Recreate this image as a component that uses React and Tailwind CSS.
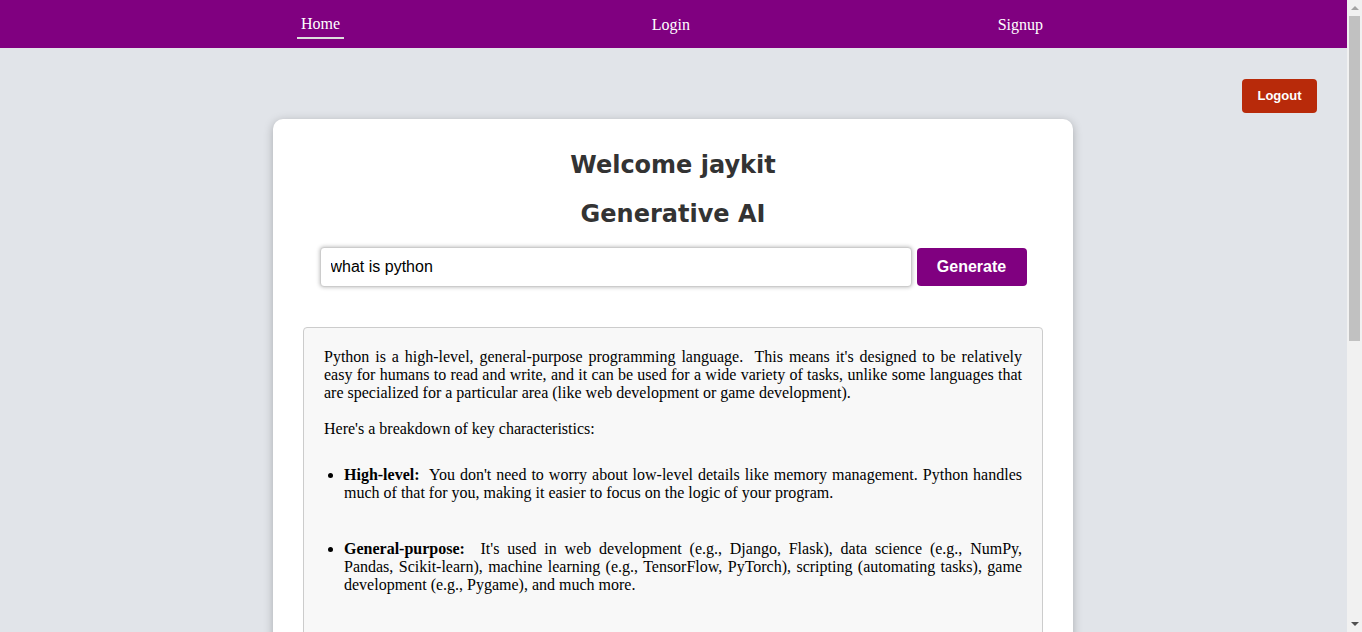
import { useState } from "react";

const serif = { fontFamily: '"Liberation Serif", "Times New Roman", serif' };

function NavBar() {
  return (
    <nav className="h-12 bg-[#800080]">
      <ul className="ml-[297px] w-[746px] flex justify-between items-start text-white text-base font-['Liberation_Serif',serif]">
        <li className="mt-[15px] px-1 pb-[4px] border-b-2 border-[#dddddd] leading-[18px]">Home</li>
        <li className="mt-[16px] leading-[18px]">Login</li>
        <li className="mt-[16px] leading-[18px]">Signup</li>
      </ul>
    </nav>
  );
}

// fake page scrollbar, drawn over the right edge like the browser's own
function ScrollBar() {
  return (
    <div className="fixed right-0 top-0 flex h-screen w-[15px] flex-col bg-[#f1f1f1]">
      <div className="flex h-[16px] items-center justify-center">
        <div className="h-0 w-0 border-x-[4px] border-b-[4px] border-x-transparent border-b-[#a3a3a3]" />
      </div>
      <div className="mx-[2px] h-[325px] bg-[#c1c1c1]" />
      <div className="flex-1" />
      <div className="flex h-[16px] items-center justify-center">
        <div className="h-0 w-0 border-x-[4px] border-t-[4px] border-x-transparent border-t-[#505050]" />
      </div>
    </div>
  );
}

export default function App() {
  const [prompt, setPrompt] = useState("what is python");

  return (
    <div className="min-h-screen bg-[#e1e4e9]">
      <ScrollBar />
      <div className="mr-[15px] pb-[60px]">
        <NavBar />
        <div className="flex justify-end pr-[30px] pt-[31px]">
          <button className="h-[34px] w-[75px] rounded bg-[#b82a0a] text-white text-[13px] font-bold font-['Liberation_Sans',Arial,sans-serif]">
            Logout
          </button>
        </div>

        <div className="ml-[273px] mt-[6px] w-[800px] rounded-[10px] bg-white px-[30px] pt-[32px] pb-[30px] shadow-[0_2px_10px_rgba(0,0,0,0.25)]">
          <h2 className="text-center text-2xl leading-[28px] font-bold text-[#333] font-['DejaVu_Sans',Verdana,sans-serif]">Welcome jaykit</h2>
          <h2 className="mt-[21px] text-center text-2xl leading-[28px] font-bold text-[#333] font-['DejaVu_Sans',Verdana,sans-serif]">Generative AI</h2>

          <div className="mt-[19px] flex items-center justify-center gap-[5px]">
            <input
              value={prompt}
              onChange={e => setPrompt(e.target.value)}
              className="h-10 w-[592px] rounded border border-[#ccc] bg-white px-[10px] text-base text-black shadow-[0_0_4px_rgba(0,0,0,0.3)] outline-none font-['Liberation_Sans',Arial,sans-serif]"
            />
            <button className="h-[38px] w-[110px] rounded bg-[#800080] text-white text-base font-bold font-['Liberation_Sans',Arial,sans-serif]">
              Generate
            </button>
          </div>

          <div className="mt-[40px] rounded border border-[#cccccc] bg-[#f8f8f8] px-[20px] pt-[20px] pb-[40px] text-base leading-[18px] text-black text-justify" style={serif}>
            <p>
              Python is a high-level, general-purpose programming language.&nbsp; This means it's designed to be relatively easy for humans to read and write, and it can be used for a wide variety of tasks, unlike some languages that are specialized for a particular area (like web development or game development).
            </p>
            <p className="mt-[18px]">Here's a breakdown of key characteristics:</p>

            <ul className="mt-[28px] list-disc pl-[20px]">
              <li>
                <b>High-level:</b>&nbsp; You don't need to worry about low-level details like memory management. Python handles much of that for you, making it easier to focus on the logic of your program.
              </li>
              <li className="mt-[38px]">
                <b>General-purpose:</b>&nbsp; It's used in web development (e.g., Django, Flask), data science (e.g., NumPy, Pandas, Scikit-learn), machine learning (e.g., TensorFlow, PyTorch), scripting (automating tasks), game development (e.g., Pygame), and much more.
              </li>
              <li className="mt-[38px]">
                <b>Interpreted:</b>&nbsp; Python code is executed line by line by an interpreter, rather than being compiled into machine code beforehand. This makes development faster, since you can test changes immediately.
              </li>
              <li className="mt-[38px]">
                <b>Dynamically typed:</b>&nbsp; You don't have to declare the type of a variable. The type is checked while the program runs.
              </li>
              <li className="mt-[38px]">
                <b>Readable syntax:</b>&nbsp; Python uses indentation to define code blocks, which encourages clean and consistent code.
              </li>
            </ul>
            <p className="mt-[28px]">In short, Python is a versatile and beginner-friendly language that is widely used across many fields.</p>
          </div>
        </div>
      </div>
    </div>
  );
}
